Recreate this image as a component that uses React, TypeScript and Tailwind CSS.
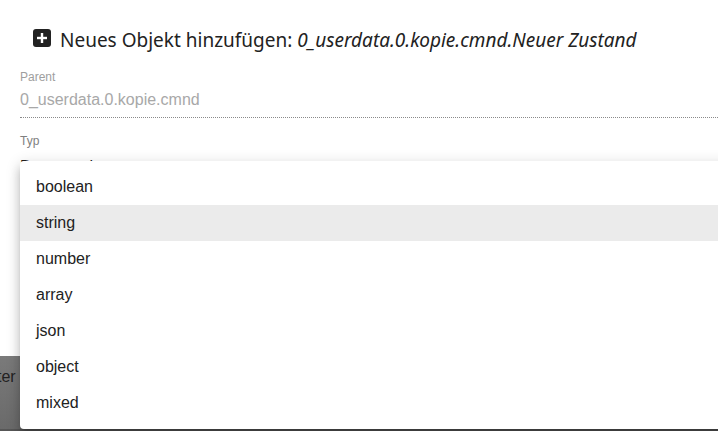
import React from "react";

const items = ["boolean", "string", "number", "array", "json", "object", "mixed"];

export default function App() {
  return (
    <div className="relative w-[718px] h-[431px] overflow-hidden bg-white" style={{ fontFamily: "'Liberation Sans', Arial, sans-serif" }}>
      <div className="h-[356px] bg-white flex flex-col">
        <div className="flex items-center pl-[33px] pt-[29px] h-[47px]">
          <div className="w-[18px] h-[18px] rounded-[3px] bg-[#222] flex items-center justify-center shrink-0">
            <svg width="12" height="12" viewBox="0 0 12 12">
              <rect x="4.8" y="1" width="2.4" height="10" fill="#fff" />
              <rect x="1" y="4.8" width="10" height="2.4" fill="#fff" />
            </svg>
          </div>
          <div className="ml-[9px] mt-[5px] text-[19px] leading-none text-[#222] whitespace-nowrap" style={{ fontFamily: "'Noto Sans', 'Open Sans', sans-serif" }}>
            Neues Objekt hinzufügen: <span className="italic">0_userdata.0.kopie.cmnd.Neuer Zustand</span>
          </div>
        </div>
        <div className="ml-[20px] mt-[23px] flex flex-col">
          <div className="text-[12px] leading-[14px] text-[#9e9e9e]">Parent</div>
          <div className="mt-[6px] text-[16px] leading-[19px] text-[#a8a8a8] pb-[8px] border-b border-dotted border-[#8a8a8a]">0_userdata.0.kopie.cmnd</div>
          <div className="mt-[16px] text-[12px] leading-[14px] text-[#7f7f7f]">Typ</div>
          <div className="mt-[9px] text-[16px] leading-[19px] text-[#222]">Datenpunkt</div>
        </div>
      </div>
      <div className="h-[75px] bg-gradient-to-b from-[#7a7a7a] to-[#6a6a6a] relative">
        <div className="absolute left-[-3px] top-[9px] text-[16px] text-[#222]">ter</div>
        <div className="absolute left-0 right-0 bottom-0 h-[2px] bg-[#575757]" />
      </div>
      <div className="absolute left-[20px] top-[161px] w-[720px] rounded-[4px] bg-white py-[8px] shadow-[0px_5px_5px_-3px_rgba(0,0,0,0.2),0px_8px_10px_1px_rgba(0,0,0,0.14),0px_3px_14px_2px_rgba(0,0,0,0.12)]">
        {items.map((it) => (
          <div key={it} className={`h-[36px] flex items-center pl-[16px] text-[16px] text-[#222] ${it === "string" ? "bg-[#ebebeb]" : ""}`}>
            {it}
          </div>
        ))}
      </div>
    </div>
  );
}
